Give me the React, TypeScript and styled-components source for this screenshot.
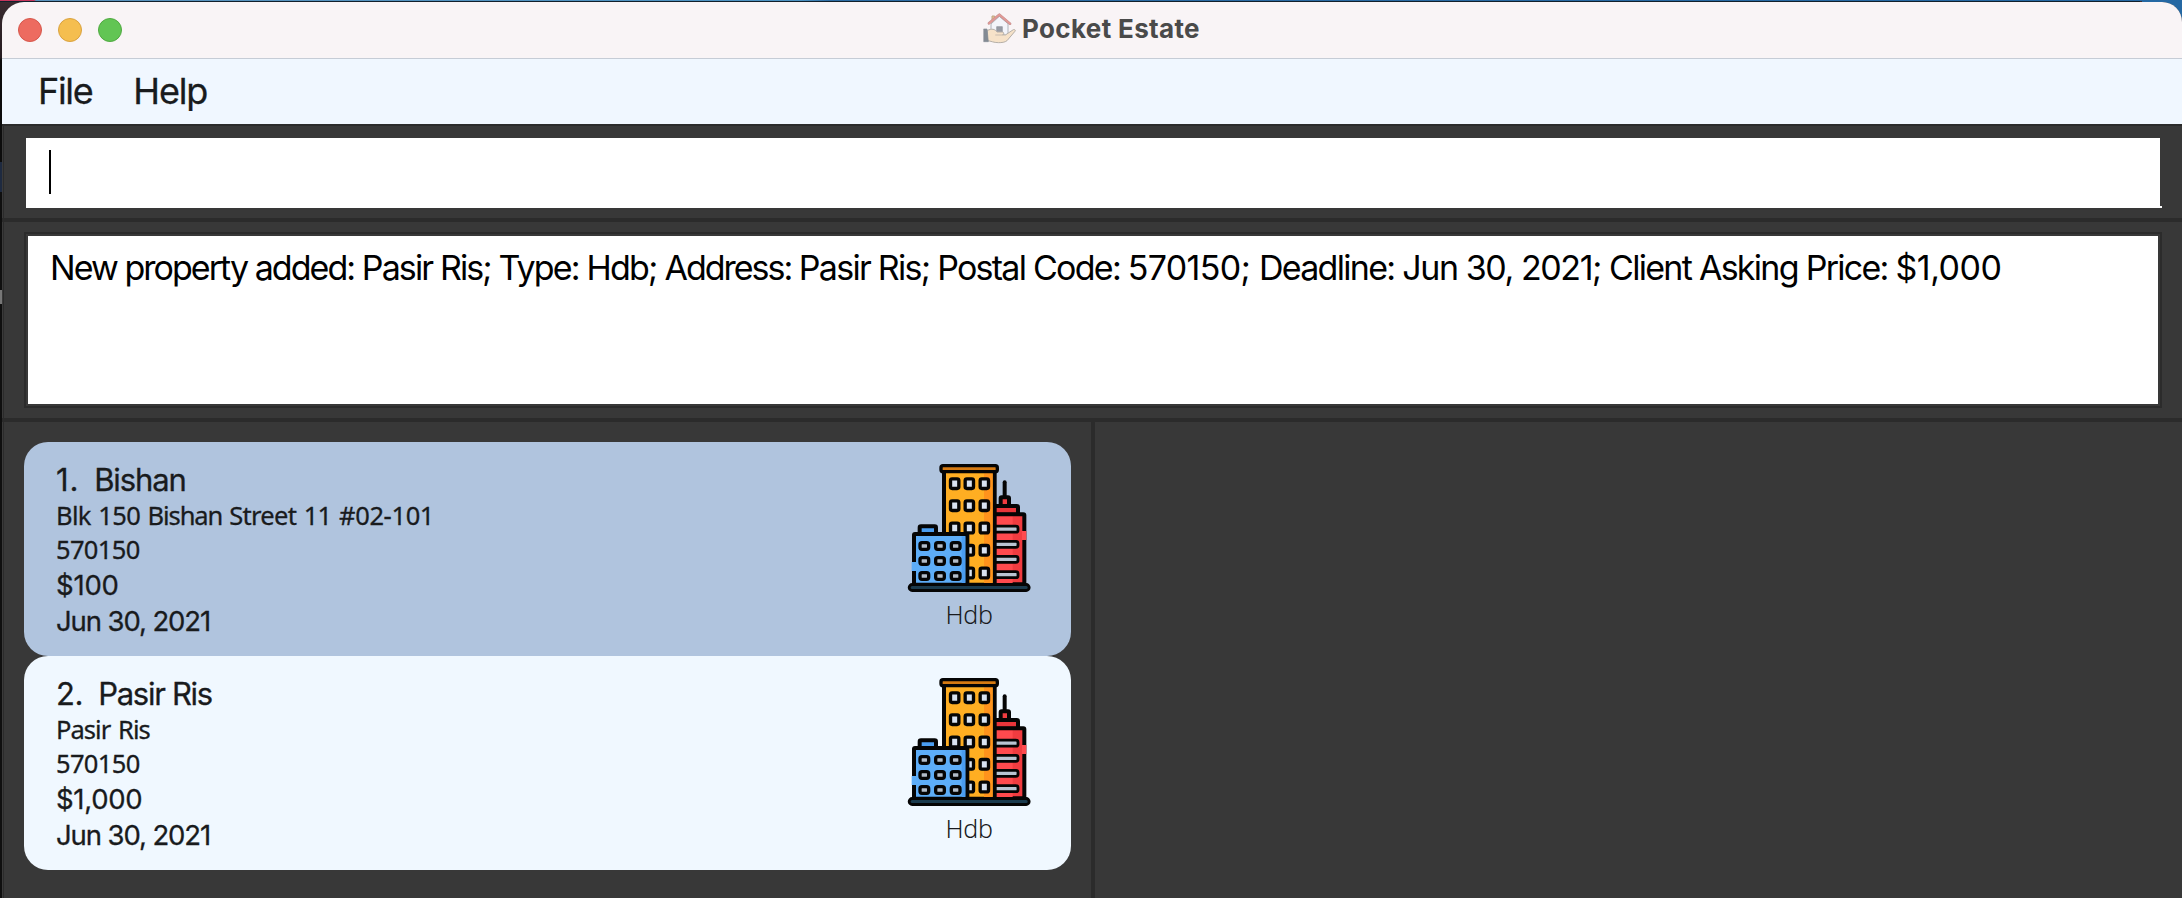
import React from "react";
import styled, { createGlobalStyle } from "styled-components";

const GlobalStyle = createGlobalStyle`
  * { box-sizing: border-box; }
  html, body { margin: 0; height: 100%; overflow: hidden; }
  body {
    font-family: Inter, "Liberation Sans", sans-serif;
    color: #191b1d;
    background:
      linear-gradient(#12202c, #12202c) 0 1px / 2140px 1px no-repeat,
      linear-gradient(to right, #c5355c 0 34px, #5b93bd 36px, #4c93c3 800px, #2d6ca4 830px, #2568a3) 0 0 / 100% 1px no-repeat,
      linear-gradient(#2568a3, #2568a3) 100% 0 / 40px 30px no-repeat,
      linear-gradient(#3a2b30, #251b20 58px, #0c0c0c 60px 162px, #1e2a40 162px 192px, #0f0f0f 192px 290px, #777 290px 304px, #0f0f0f 304px);
  }
`;

const Desktop = styled.div`
  height: 898px;
  padding: 2px 0 0 2px;
`;

const AppWindow = styled.div`
  height: 100%;
  display: flex;
  flex-direction: column;
  overflow: hidden;
  border-radius: 22px 20px 0 0;
  background: #383838;
`;

const TitleBar = styled.header`
  flex: 0 0 57px;
  display: grid;
  grid-template-columns: 1fr auto 1fr;
  align-items: center;
  padding-right: 4px;
  background: #f9f4f6;
  border-bottom: 1px solid #c6ccd6;
`;

const Lights = styled.div`
  display: flex;
  gap: 16px;
  padding-left: 16px;
`;

const Light = styled.span<{ $fill: string; $edge: string }>`
  width: 24px;
  height: 24px;
  border-radius: 50%;
  background: ${(p) => p.$fill};
  border: 1px solid ${(p) => p.$edge};
`;

const Title = styled.h1`
  margin: 0;
  display: flex;
  align-items: center;
  gap: 2px;
  padding-bottom: 3px;
  font-size: 26px;
  font-weight: 700;
  line-height: 53px;
  letter-spacing: 0.35px;
  color: #4a4a4a;
`;

const MenuBar = styled.nav`
  flex: 0 0 65px;
  display: flex;
  gap: 41px;
  padding-left: 36px;
  background: #f0f7ff;
`;

const MenuItem = styled.span<{ $tracking: number }>`
  font-size: 36px;
  line-height: 64px;
  letter-spacing: ${(p) => p.$tracking}px;
  -webkit-text-stroke: 0.3px #191b1d;
`;

const Content = styled.main`
  flex: 1;
  min-height: 0;
  display: flex;
  flex-direction: column;
  border-top: 2px solid #2b2b2b;
  background: linear-gradient(to right, #3a3a3a 1px, #2b2b2b 1px 2px, #383838 2px);
`;

const CommandPane = styled.section`
  height: 96px;
  padding: 12px 20px 10px 24px;
  border-bottom: 4px solid #2b2b2b;
`;

const CommandField = styled.div`
  height: 70px;
  padding: 12px 23px;
  background:
    linear-gradient(#383838, #383838) 100% 0 / 2px 68px no-repeat,
    #fff;
`;

const Caret = styled.span`
  display: block;
  width: 2px;
  height: 44px;
  background: #000;
`;

const ResultPane = styled.section`
  height: 200px;
  padding: 10px 20px 10px 22px;
  border-bottom: 4px solid #2b2b2b;
`;

const ResultFrame = styled.div`
  height: 176px;
  padding: 2px;
  border: 2px solid #2b2b2b;
`;

const ResultText = styled.div`
  height: 168px;
  padding: 10px 0 0 22px;
  background: #fff;
  color: #000;
  font-size: 34px;
  line-height: 43px;
  white-space: pre;
`;

const Tracked = styled.span<{ $tracking: number }>`
  letter-spacing: ${(p) => p.$tracking}px;
`;

const Split = styled.section`
  flex: 1;
  min-height: 0;
  display: flex;
`;

const ListPane = styled.div`
  width: 1089px;
  padding: 20px 20px 0 22px;
`;

const DetailPane = styled.div`
  flex: 1;
  border-left: 4px solid #2b2b2b;
`;

const Card = styled.article<{ $selected?: boolean }>`
  height: 214px;
  display: flex;
  justify-content: space-between;
  padding: 19px 38px 0 32px;
  border-radius: 24px;
  background: ${(p) => (p.$selected ? "#b0c4de" : "#f0f8ff")};
`;

const Facts = styled.div`
  display: flex;
  flex-direction: column;
  white-space: pre;
`;

const Name = styled.div`
  display: flex;
  gap: 15px;
  font-size: 31px;
  line-height: 38px;
  margin-bottom: -1px;
  -webkit-text-stroke: 0.3px #191b1d;
`;

const Detail = styled.div<{ $tracking?: number; $word?: number }>`
  font-family: "Noto Sans", "Open Sans", sans-serif;
  font-size: 25.5px;
  line-height: 34px;
  letter-spacing: ${(p) => p.$tracking ?? 0}px;
  word-spacing: ${(p) => p.$word ?? 0}px;
  -webkit-text-stroke: 0.3px #191b1d;
`;

const Figure = styled.div<{ $tracking: number; $height: number }>`
  font-size: 27.5px;
  line-height: ${(p) => p.$height}px;
  letter-spacing: ${(p) => p.$tracking}px;
  -webkit-text-stroke: 0.3px #191b1d;
`;

const Kind = styled.div`
  display: flex;
  flex-direction: column;
  align-items: center;
  padding-top: 3px;
  gap: 6px;
  font-family: "Noto Sans", sans-serif;
  font-size: 25px;
  font-weight: 300;
  line-height: 32px;
  letter-spacing: -0.3px;
`;

const BuildingsIcon = () => (
  <svg width="128" height="128" viewBox="45 42 384 384" stroke="#050505" strokeLinejoin="round">
    <path d="M344 97v45" strokeWidth="12" strokeLinecap="round" />
    <rect x="332" y="142" width="25" height="27" rx="3" fill="#f03c40" strokeWidth="12" />
    <rect x="310" y="168" width="74" height="26" rx="4" fill="#e8353a" strokeWidth="12" />
    <rect x="310" y="193" width="93" height="210" rx="3" fill="#f03c40" strokeWidth="12" />
    <path d="M318 200h50v202h-50z" fill="#ff4a4e" stroke="none" />
    <path d="M396 243h13v27h-13z" fill="#ff4a4e" stroke="none" />
    {[237.5, 283, 328, 374].map((y) => (
      <rect key={y} x="308" y={y - 9} width="76" height="18" rx="6" fill="#b9c4d2" strokeWidth="8.500" />
    ))}
    <rect x="162" y="60" width="152" height="344" fill="#ffae22" strokeWidth="12" />
    <path d="M282 70h26v332h-26z" fill="#ff931c" stroke="none" />
    <rect x="153" y="47" width="169" height="18" rx="6" fill="#d67a12" strokeWidth="10" />
    {[101, 167, 234, 301, 369].map((y) =>
      [194, 238, 283].map((x) => (
        <rect key={`${x}-${y}`} x={x - 12.5} y={y - 14.5} width="25" height="29" rx="5" fill="#d8e2f0" strokeWidth="10" />
      ))
    )}
    <rect x="89" y="229" width="49" height="30" rx="4" fill="#4a9df0" strokeWidth="12" />
    <rect x="72" y="252" width="160" height="152" rx="3" fill="#5dadf8" strokeWidth="12" />
    <path d="M215 259h11v143h-11z" fill="#4a9cf0" stroke="none" />
    <path d="M65 336h13v27H65z" fill="#5dadf8" stroke="none" />
    {[288, 333, 378].map((y) =>
      [103, 150, 197].map((x) => (
        <rect key={`${x}-${y}`} x={x - 13} y={y - 10} width="26" height="20" rx="6" fill="#b2bcc8" strokeWidth="10" />
      ))
    )}
    <rect x="57.500" y="403.500" width="360" height="18" rx="9" fill="#1b3b4e" strokeWidth="8.500" />
  </svg>
);

const HouseIcon = () => (
  <svg width="40" height="36" viewBox="9 8 120 108" opacity="0.85" strokeLinejoin="round" strokeLinecap="round">
    <path d="M45 36V23h8v8" fill="#e3b671" stroke="#b39a78" strokeWidth="3" />
    <path d="M43 46 67 24l26 22v34H43z" fill="#f2f5fb" stroke="#a3a8b0" strokeWidth="3" />
    <path d="M59 76V55h17v21z" fill="#868c98" stroke="#7c828c" strokeWidth="2" />
    <path d="M36 45 67 19l32 27" fill="none" stroke="#b98080" strokeWidth="8" />
    <path d="M36 45 67 19l32 27" fill="none" stroke="#e08a86" strokeWidth="5" />
    <path d="M32 66c12-6 22-4 28 5h16c5 0 6 7 1 8l8 1 24-16c5-2 8 3 4 6L90 97c-6 5-16 6-26 6-14 0-22-5-32-6z" fill="#f6dfc2" stroke="#aaa49c" strokeWidth="3" />
    <path d="M56 80h22" stroke="#b5aa9c" strokeWidth="2.500" />
    <path d="M21 62h9l4 38H21z" fill="#6f7883" stroke="#6f7883" strokeWidth="2" />
  </svg>
);

type Segment = [text: string, tracking: number];

const message: Segment[] = [
  ["New property added: ", -1.95],
  ["Pasir Ris; ", -1.88],
  ["Type: ", -1.82],
  ["Hdb; ", -1.74],
  ["Address: ", -2.0],
  ["Pasir Ris; ", -1.72],
  ["Postal Code: ", -1.74],
  ["570150; ", -0.69],
  ["Deadline: ", -1.7],
  ["Jun 30, 2021; ", -1.42],
  ["Client Asking Price: ", -1.72],
  ["$1,000", -0.5],
];

const bishanAddress: Segment[] = [
  ["Blk 150 ", -0.65],
  ["Bishan ", -1.1],
  ["Street ", -0.7],
  ["11 ", -0.62],
  ["#02-101", -0.38],
];

const Segments = ({ items }: { items: Segment[] }) => (
  <span>
    {items.map(([text, tracking], i) => (
      <Tracked key={i} $tracking={tracking}>{text}</Tracked>
    ))}
  </span>
);

export default function App() {
  return (
    <>
      <GlobalStyle />
      <Desktop>
        <AppWindow>
          <TitleBar>
            <Lights>
              <Light $fill="#ed6b60" $edge="#d6574c" />
              <Light $fill="#f5be4f" $edge="#d9a240" />
              <Light $fill="#62c554" $edge="#50a941" />
            </Lights>
            <Title><HouseIcon />Pocket Estate</Title>
          </TitleBar>
          <MenuBar>
            <MenuItem $tracking={-1.33}>File</MenuItem>
            <MenuItem $tracking={-1.17}>Help</MenuItem>
          </MenuBar>
          <Content>
            <CommandPane><CommandField><Caret /></CommandField></CommandPane>
            <ResultPane>
              <ResultFrame>
                <ResultText><Segments items={message} /></ResultText>
              </ResultFrame>
            </ResultPane>
            <Split>
              <ListPane>
                <Card $selected>
                  <Facts>
                    <Name><Tracked $tracking={0.8}>1.</Tracked><Tracked $tracking={-1.1}>Bishan</Tracked></Name>
                    <Detail $word={1.5}><Segments items={bishanAddress} /></Detail>
                    <Detail $tracking={-0.65}>570150</Detail>
                    <Figure $tracking={-0.2} $height={38}>$100</Figure>
                    <Figure $tracking={-1.1} $height={34}>Jun 30, 2021</Figure>
                  </Facts>
                  <Kind><BuildingsIcon />Hdb</Kind>
                </Card>
                <Card>
                  <Facts>
                    <Name><Tracked $tracking={-0.3}>2.</Tracked><Tracked $tracking={-1.3}>Pasir Ris</Tracked></Name>
                    <Detail $tracking={-0.95} $word={2}>Pasir Ris</Detail>
                    <Detail $tracking={-0.65}>570150</Detail>
                    <Figure $tracking={-0.3} $height={38}>$1,000</Figure>
                    <Figure $tracking={-1.1} $height={34}>Jun 30, 2021</Figure>
                  </Facts>
                  <Kind><BuildingsIcon />Hdb</Kind>
                </Card>
              </ListPane>
              <DetailPane />
            </Split>
          </Content>
        </AppWindow>
      </Desktop>
    </>
  );
}
